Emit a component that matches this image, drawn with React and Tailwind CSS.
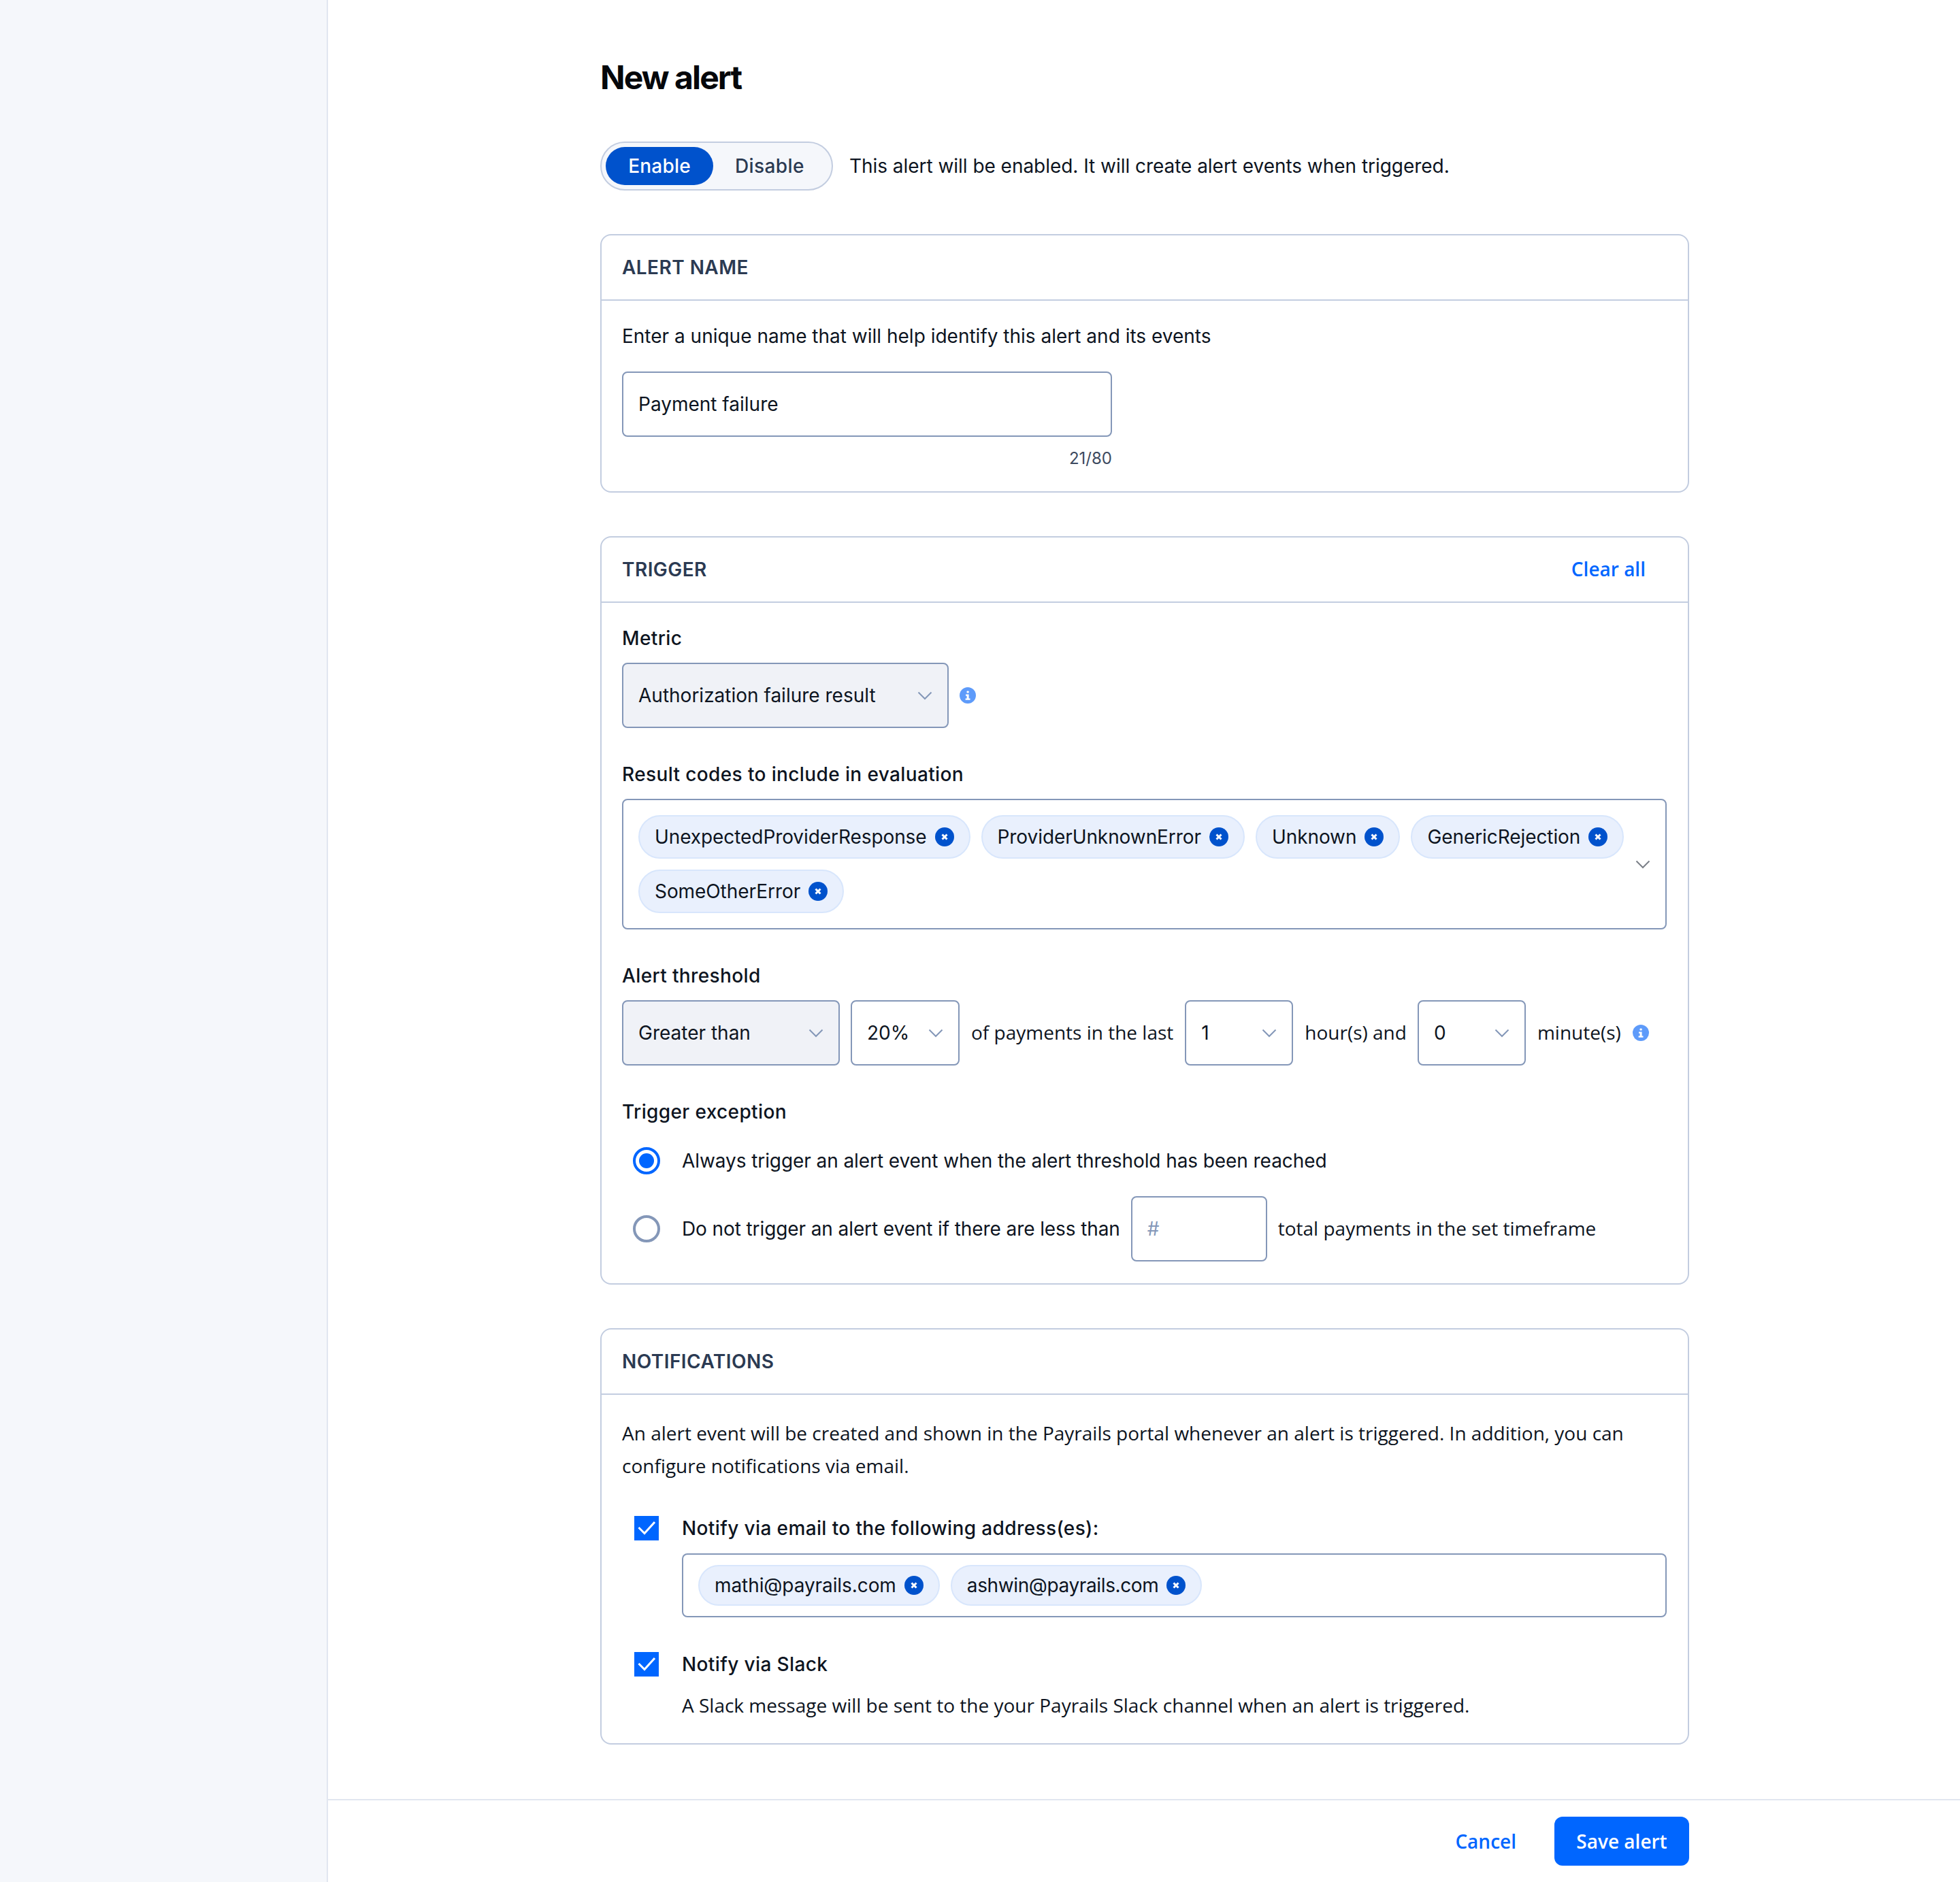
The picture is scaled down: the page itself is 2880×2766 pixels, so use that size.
import React from 'react'

const OPEN = "font-['Open_Sans',sans-serif]"

const Chevron = ({ className = 'text-[#8497b8]' }) => (
  <svg width="22" height="13" viewBox="0 0 22 13" fill="none" stroke="currentColor" strokeWidth="2" className={`shrink-0 ${className}`}>
    <path d="M1.5 1.5L11 11l9.5-9.5" />
  </svg>
)

const InfoIcon = () => (
  <svg width="24" height="24" viewBox="0 0 24 24" className="shrink-0">
    <circle cx="12" cy="12" r="12" fill="#5e9bfa" />
    <rect x="10.5" y="5.5" width="3.2" height="3" rx="1" fill="#fff" />
    <path d="M9 10.5h4.6v6H15.5v2.2H8.6v-2.2h2v-3.8H9z" fill="#fff" />
  </svg>
)

const Chip = ({ label, small, tight }) => (
  <div className={`flex items-center gap-[12px] rounded-full border-2 border-[#d8e6fc] bg-[#e9f0fd] pl-[22px] pr-[22px] text-[28px] text-[#0d1421] ${tight ? 'tracking-[-0.38px]' : 'tracking-[-0.08px]'} ${small ? 'h-[60px]' : 'h-[64px]'}`}>
    <span>{label}</span>
    <svg width="28" height="28" viewBox="0 0 28 28" className="shrink-0">
      <circle cx="14" cy="14" r="14" fill="#0052cc" />
      <path d="M10.5 10.5l7 7M17.5 10.5l-7 7" stroke="#fff" strokeWidth="3" />
    </svg>
  </div>
)

const Select = ({ value, width, filled }) => (
  <div className={`flex h-[96px] shrink-0 items-center justify-between rounded-lg border-2 border-[#8497b8] pl-[22px] pr-[22px] ${width} ${filled ? 'bg-[#f0f2f7]' : 'bg-white'}`}>
    <span>{value}</span>
    <Chevron />
  </div>
)

const Card = ({ title, action, children }) => (
  <section className="rounded-2xl border-2 border-[#c3cde0]">
    <div className="flex h-[96px] items-center justify-between border-b-2 border-[#c3cde0] pl-[30px] pr-[62px]">
      <h2 className="text-[28px] font-semibold tracking-[0.45px] text-[#2b3a52]">{title}</h2>
      {action}
    </div>
    {children}
  </section>
)

const Label = ({ children, className = '' }) => (
  <div className={`text-[28px] leading-[48px] font-medium tracking-[0.38px] ${className}`}>{children}</div>
)

const Radio = ({ checked }) =>
  checked ? (
    <div className="flex h-[40px] w-[40px] shrink-0 items-center justify-center rounded-full border-[4px] border-[#0066ff]">
      <div className="h-[22px] w-[22px] rounded-full bg-[#0066ff]" />
    </div>
  ) : (
    <div className="h-[40px] w-[40px] shrink-0 rounded-full border-[4px] border-[#8497b8]" />
  )

const Checkbox = () => (
  <div className="h-[36px] w-[36px] shrink-0 bg-[#0066ff]">
    <svg width="36" height="36" viewBox="0 0 36 36" fill="none" stroke="#fff" strokeWidth="3">
      <path d="M6.5 17L15 25.5 30 9" />
    </svg>
  </div>
)

export default function App() {
  const codes = ['UnexpectedProviderResponse', 'ProviderUnknownError', 'Unknown', 'GenericRejection', 'SomeOtherError']

  return (
    <div className="flex h-[2766px] w-[2880px] bg-white font-[Inter,sans-serif] text-[28px] leading-[48px] text-[#0d1421]">
      {/* Sidebar */}
      <aside className="w-[482px] shrink-0 border-r-2 border-[#e1e6f0] bg-[#f5f7fb]" />

      <main className="flex min-w-0 flex-1 flex-col">
        <div className="flex-1 pt-[84px] pl-[400px] pr-[398px]">
          <h1 className="text-[48px] leading-[60px] font-bold tracking-[-1.9px] text-[#05070b]">New alert</h1>

          <div className="mt-[64px] flex items-center gap-[24px]">
            <div className="flex h-[72px] w-[342px] items-center rounded-full border-2 border-[#c3cde0] bg-[#f5f7fb] pl-[6px]">
              <div className="flex h-[56px] w-[158px] items-center justify-center rounded-full bg-[#0052cc] font-medium tracking-[0.2px] text-white">Enable</div>
              <div className="ml-[32px] font-medium tracking-[0.4px] text-[#2b3a52]">Disable</div>
            </div>
            <p className="tracking-[-0.04px]">This alert will be enabled. It will create alert events when triggered.</p>
          </div>

          <div className="mt-[64px] flex flex-col gap-[64px]">
            <Card title="ALERT NAME">
              <div className="pl-[30px] pr-[31px] pt-[28px] pb-[32px]">
                <p>Enter a unique name that will help identify this alert and its events</p>
                <div className="mt-[28px] flex h-[96px] w-[720px] items-center rounded-lg border-2 border-[#8497b8] pl-[22px]">Payment failure</div>
                <div className="mt-[16px] w-[720px] text-right text-[24px] leading-[32px] text-[#3d4a5f]">21/80</div>
              </div>
            </Card>

            <Card title="TRIGGER" action={<button className={`${OPEN} mb-[2px] text-[28px] font-semibold text-[#0066ff]`}>Clear all</button>}>
              <div className="pl-[30px] pr-[31px] pt-[28px] pb-[32px]">
                <Label>Metric</Label>
                <div className="mt-[12px] flex items-center gap-[16px]">
                  <Select value="Authorization failure result" width="w-[480px]" filled />
                  <InfoIcon />
                </div>

                <Label className="mt-[44px]">Result codes to include in evaluation</Label>
                <div className="mt-[12px] flex items-center justify-between rounded-lg border-2 border-[#8497b8] py-[22px] pl-[22px] pr-[22px]">
                  <div className="flex flex-wrap gap-[16px]">
                    {codes.map((code) => (
                      <Chip key={code} label={code} />
                    ))}
                  </div>
                  <Chevron className="text-[#7a7f87]" />
                </div>

                <Label className="mt-[44px]">Alert threshold</Label>
                <div className="mt-[12px] flex items-center">
                  <Select value="Greater than" width="w-[320px]" filled />
                  <div className="ml-[16px]"><Select value="20%" width="w-[160px]" /></div>
                  <span className={`${OPEN} mb-[2px] ml-[17px]`}>of payments in the last</span>
                  <div className="ml-[17px]"><Select value="1" width="w-[159px]" /></div>
                  <span className={`${OPEN} mb-[2px] ml-[17px]`}>hour(s) and</span>
                  <div className="ml-[16px]"><Select value="0" width="w-[159px]" /></div>
                  <span className={`${OPEN} mb-[2px] ml-[17px]`}>minute(s)</span>
                  <div className="ml-[17px]"><InfoIcon /></div>
                </div>

                <Label className="mt-[44px]">Trigger exception</Label>
                <div className="mt-[24px] flex h-[48px] items-center pl-[16px]">
                  <Radio checked />
                  <span className="ml-[32px] tracking-[-0.08px]">Always trigger an alert event when the alert threshold has been reached</span>
                </div>
                <div className="mt-[28px] flex items-center pl-[16px]">
                  <Radio />
                  <span className="ml-[32px] tracking-[-0.1px]">Do not trigger an alert event if there are less than</span>
                  <div className="ml-[16px] flex h-[96px] w-[200px] items-center rounded-lg border-2 border-[#8497b8] pl-[22px] text-[#8497b8]">#</div>
                  <span className={`${OPEN} mb-[2px] ml-[16px]`}>total payments in the set timeframe</span>
                </div>
              </div>
            </Card>

            <Card title="NOTIFICATIONS">
              <div className="pl-[30px] pr-[31px] pt-[32px] pb-[32px]">
                <p className={OPEN}>An alert event will be created and shown in the Payrails portal whenever an alert is triggered. In addition, you can configure notifications via email.</p>

                <div className="mt-[44px] flex h-[48px] items-center pl-[18px]">
                  <Checkbox />
                  <Label className="ml-[34px]">Notify via email to the following address(es):</Label>
                </div>
                <div className="mt-[13px] ml-[88px] flex h-[94px] items-center gap-[16px] rounded-lg border-2 border-[#8497b8] pl-[22px]">
                  <Chip label="mathi@payrails.com" small />
                  <Chip label="ashwin@payrails.com" small tight />
                </div>

                <div className="mt-[45px] flex h-[48px] items-center pl-[18px]">
                  <Checkbox />
                  <Label className="ml-[34px]">Notify via Slack</Label>
                </div>
                <p className={`${OPEN} mt-[12px] ml-[88px]`}>A Slack message will be sent to the your Payrails Slack channel when an alert is triggered.</p>
              </div>
            </Card>
          </div>
        </div>

        {/* Footer actions */}
        <footer className="flex h-[122px] items-start justify-end border-t-2 border-[#e1e6f0] pt-[24px] pr-[398px]">
          <button className={`${OPEN} mt-[12px] mr-[56px] font-semibold text-[#0066ff]`}>Cancel</button>
          <button className={`${OPEN} flex h-[72px] w-[198px] items-center justify-center rounded-xl bg-[#0066ff] font-semibold text-white`}>Save alert</button>
        </footer>
      </main>
    </div>
  )
}
